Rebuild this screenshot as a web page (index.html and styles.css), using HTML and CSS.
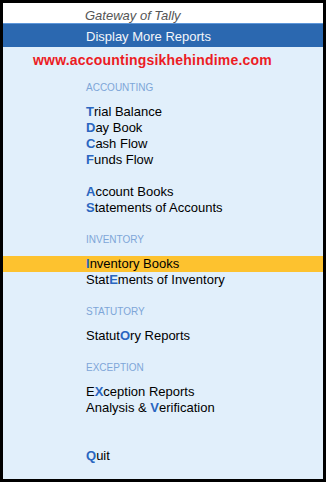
FILE: index.html
```html
<!DOCTYPE html>
<html>
<head>
<meta charset="utf-8">
<link rel="stylesheet" href="styles.css">
</head>
<body>
<div class="frame">
  <div class="header">Gateway of Tally</div>
  <div class="sep"></div>
  <div class="titlebar">Display More Reports</div>
  <div class="site">www.accountingsikhehindime.com</div>

  <div class="heading first">ACCOUNTING</div>
  <div class="group">
    <div class="item"><span class="key">T</span>rial Balance</div>
    <div class="item"><span class="key">D</span>ay Book</div>
    <div class="item"><span class="key">C</span>ash Flow</div>
    <div class="item"><span class="key">F</span>unds Flow</div>
  </div>
  <div class="group spaced">
    <div class="item"><span class="key">A</span>ccount Books</div>
    <div class="item"><span class="key">S</span>tatements of Accounts</div>
  </div>

  <div class="heading">INVENTORY</div>
  <div class="group">
    <div class="item selected"><span class="key">I</span>nventory Books</div>
    <div class="item">Stat<span class="key">E</span>ments of Inventory</div>
  </div>

  <div class="heading">STATUTORY</div>
  <div class="group">
    <div class="item">Statut<span class="key">O</span>ry Reports</div>
  </div>

  <div class="heading">EXCEPTION</div>
  <div class="group">
    <div class="item">E<span class="key">X</span>ception Reports</div>
    <div class="item">Analysis &amp; <span class="key">V</span>erification</div>
  </div>

  <div class="group quit">
    <div class="item"><span class="key">Q</span>uit</div>
  </div>
</div>
</body>
</html>
```

FILE: styles.css
```css
html, body {
  margin: 0;
  padding: 0;
  background: #000;
}

.frame {
  width: 320px;
  height: 476px;
  border: 3px solid #000;
  background: #e1effb;
  font-family: "Liberation Sans", Arial, sans-serif;
  font-size: 13px;
  color: #000;
  overflow: hidden;
}

.header {
  height: 20px;
  box-sizing: border-box;
  padding: 6px 0 0 82px;
  line-height: 14px;
  background: #fff;
  color: #555;
  font-style: italic;
}

.sep {
  height: 1px;
  background: #5e97da;
}

.titlebar {
  height: 23px;
  box-sizing: border-box;
  padding: 2px 0 0 83px;
  line-height: 21px;
  background: #2b68b0;
  color: #f4f6fa;
}

.site {
  margin-top: 5px;
  padding-left: 30px;
  line-height: 16px;
  font-size: 14px;
  font-weight: bold;
  letter-spacing: 0.2px;
  color: #ec1c24;
}

.heading {
  margin-top: 16px;
  padding-left: 83px;
  line-height: 16px;
  font-size: 10px;
  color: #7ea6d8;
}

.heading.first {
  margin-top: 12px;
}

.group {
  margin-top: 8px;
}

.group.spaced {
  margin-top: 16px;
}

.group.quit {
  margin-top: 32px;
}

.item {
  padding-left: 83px;
  line-height: 16px;
  height: 16px;
}

.item.selected {
  background: #fdc22f;
}

.key {
  color: #2a66c0;
  font-weight: bold;
}
```
